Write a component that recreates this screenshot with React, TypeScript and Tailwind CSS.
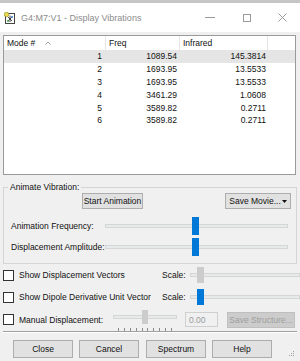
import React from "react";

const rows = [
  ["1", "1089.54", "145.3814"],
  ["2", "1693.95", "13.5533"],
  ["3", "1693.95", "13.5533"],
  ["4", "3461.29", "1.0608"],
  ["5", "3589.82", "0.2711"],
  ["6", "3589.82", "0.2711"],
];

const Btn = ({ label, className = "" }: { label: React.ReactNode; className?: string }) => (
  <div
    className={`flex items-center justify-center border border-[#adadad] bg-[#e1e1e1] text-[#111] ${className}`}
  >
    {label}
  </div>
);

const Check = () => <div className="ml-[3px] w-[11px] h-[11px] shrink-0 border border-[#333] bg-white" />;

// horizontal trackbar, thumb sits over the line
const Slider = ({
  width,
  at,
  blue,
  thumbH = 18,
}: {
  width: number;
  at: number;
  blue?: boolean;
  thumbH?: number;
}) => (
  <div className="relative flex items-center shrink-0" style={{ width, height: thumbH }}>
    <div className="w-full h-[4px] border border-[#d6d6d6] bg-[#e7eaea]" />
    <div
      className={`absolute top-0 w-[7px] ${blue ? "bg-[#0078d7]" : "bg-[#cccccc]"}`}
      style={{ left: at, height: thumbH }}
    />
  </div>
);

export default function App() {
  return (
    <div
      className="w-[300px] h-[361px] overflow-hidden bg-[#f0f0f0] flex flex-col text-[8.5px] leading-[10px] text-[#111]"
      style={{ fontFamily: '"Liberation Sans", Arial, sans-serif' }}
    >
      <div className="h-[3px] bg-[#c6c6c6]" />
      {/* title bar */}
      <div className="h-[29px] bg-white flex items-center">
        <svg className="ml-[4px]" width="12" height="12" viewBox="0 0 12 12">
          <rect x="1.5" y="1.5" width="9" height="10" fill="#fff" stroke="#444" />
          <circle cx="2.5" cy="2.5" r="2.3" fill="#e8d84a" stroke="#8a8a20" strokeWidth="0.6" />
          <path d="M4 5 L8 9 M8 5 L4 9 M6 3.5 L6 10" stroke="#333" strokeWidth="0.9" />
          <circle cx="8" cy="5" r="1" fill="#3a7bd5" />
          <circle cx="4" cy="9" r="1" fill="#3aa04a" />
        </svg>
        <span className="ml-[5px] text-[9px] text-[#8c8c8c]">G4:M7:V1 - Display Vibrations</span>
        <div className="ml-auto flex items-center">
          <div className="w-[10px] h-px bg-[#9a9a9a] mr-[28px]" />
          <div className="w-[8px] h-[8px] border border-[#9a9a9a] mr-[27px]" />
          <svg className="mr-[13px]" width="9" height="9" viewBox="0 0 9 9">
            <path d="M0.5 0.5 L8.5 8.5 M8.5 0.5 L0.5 8.5" stroke="#9a9a9a" strokeWidth="1" />
          </svg>
        </div>
      </div>

      {/* list view */}
      <div className="mt-[3px] mx-[3px] w-[293px] h-[140px] border border-[#9a9a9a] bg-white flex flex-col">
        <div className="h-[14px] flex">
          <div className="w-[102px] border-r border-[#e5e5e5] pl-[3px] flex items-center">
            Mode #
            <svg className="ml-[10px]" width="6" height="4" viewBox="0 0 6 4">
              <path d="M0.5 3.5 L3 1 L5.5 3.5" stroke="#9a9a9a" fill="none" />
            </svg>
          </div>
          <div className="w-[74px] border-r border-[#e5e5e5] pl-[3px] flex items-center">Freq</div>
          <div className="w-[88px] border-r border-[#e5e5e5] pl-[3px] flex items-center">Infrared</div>
        </div>
        {rows.map((r, i) => (
          <div key={i} className={`h-[12.8px] flex items-center ${i === 0 ? "bg-[#e5e5e5]" : ""}`}>
            <div className="w-[102px] pr-[4px] text-right">{r[0]}</div>
            <div className="w-[74px] pr-[3px] text-right">{r[1]}</div>
            <div className="w-[88px] pr-[2px] text-right">{r[2]}</div>
          </div>
        ))}
      </div>

      {/* animate group */}
      <fieldset className="mt-[7px] mx-[3px] w-[294px] border border-[#d5d5d5] pb-[7px]">
        <legend className="ml-[4px] px-[2px] leading-[10px]">Animate Vibration:</legend>
        <div className="mt-[1px] h-[16px] flex">
          <Btn label="Start Animation" className="ml-[78px] w-[61px]" />
          <Btn
            label={
              <span className="flex items-center">
                Save Movie...
                <svg className="ml-[1px]" width="5" height="3" viewBox="0 0 5 3">
                  <path d="M0 0 L5 0 L2.5 3 Z" fill="#111" />
                </svg>
              </span>
            }
            className="ml-auto mr-[5px] w-[66px]"
          />
        </div>
        <div className="mt-[8px] flex items-center">
          <span className="w-[101px] pl-[7px]">Animation Frequency:</span>
          <Slider width={183} at={87} blue />
        </div>
        <div className="mt-[3px] flex items-center">
          <span className="w-[101px] pl-[7px]">Displacement Amplitude:</span>
          <Slider width={183} at={87} blue />
        </div>
      </fieldset>

      {/* options */}
      <div className="mt-[3px] h-[16px] flex items-center">
        <Check />
        <span className="ml-[5px] w-[143px]">Show Displacement Vectors</span>
        <span className="w-[28px]">Scale:</span>
        <Slider width={110} at={7} thumbH={16} />
      </div>
      <div className="mt-[6px] h-[16px] flex items-center">
        <Check />
        <span className="ml-[5px] w-[143px]">Show Dipole Derivative Unit Vector</span>
        <span className="w-[28px]">Scale:</span>
        <Slider width={110} at={7} thumbH={16} blue />
      </div>
      <div className="mt-[6px] h-[17px] flex items-center">
        <Check />
        <span className="ml-[5px] w-[94px]">Manual Displacement:</span>
        <div className="self-start -mt-[1px] flex flex-col w-[64px]">
          <div className="relative h-[14px] flex items-center">
            <div className="w-full h-[4px] border border-[#d6d6d6] bg-[#e7eaea]" />
            <div className="absolute top-0 left-[29px] w-[6px] h-[14px] bg-[#cccccc]" />
          </div>
          <div className="mt-[4px] mx-[5px] flex justify-between">
            {Array.from({ length: 10 }).map((_, i) => (
              <div key={i} className="w-px h-[3px] bg-[#8a8a8a]" />
            ))}
          </div>
        </div>
        <div className="ml-[8px] w-[33px] h-[15px] border border-[#cfcfcf] bg-[#f0f0f0] text-[#9a9a9a] pl-[3px] flex items-center">
          0.00
        </div>
        <div className="ml-[9px] w-[68px] h-[16px] border border-[#bfbfbf] bg-[#cccccc] text-[#9e9e9e] flex items-center justify-center">
          Save Structure...
        </div>
      </div>

      <div className="mt-[3px] mx-[3px] h-[2px] border-t border-[#a0a0a0] border-b border-b-white" />

      <div className="mt-[7px] h-[18px] flex">
        <Btn label="Close" className="ml-[13px] w-[60px]" />
        <Btn label="Cancel" className="ml-[6px] w-[60px]" />
        <Btn label="Spectrum" className="ml-[7px] w-[60px]" />
        <Btn label="Help" className="ml-[6px] w-[60px]" />
        <svg className="ml-auto mr-[6px] self-end mb-[2px]" width="5" height="5" viewBox="0 0 5 5">
          <rect x="4" y="0" width="1" height="1" fill="#a0a0a0" />
          <rect x="2" y="2" width="1" height="1" fill="#a0a0a0" />
          <rect x="4" y="2" width="1" height="1" fill="#a0a0a0" />
          <rect x="0" y="4" width="1" height="1" fill="#a0a0a0" />
          <rect x="2" y="4" width="1" height="1" fill="#a0a0a0" />
          <rect x="4" y="4" width="1" height="1" fill="#a0a0a0" />
        </svg>
      </div>
    </div>
  );
}
